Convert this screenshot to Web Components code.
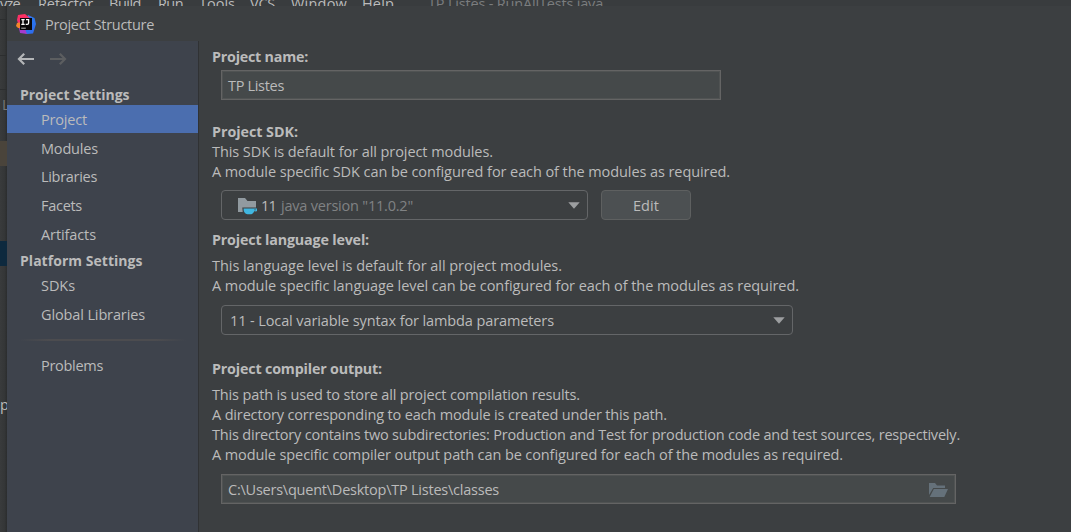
<!DOCTYPE html>
<html lang="en"><head><meta charset="utf-8"><title>Project Structure</title>
<style>
html,body{margin:0;height:100%;overflow:hidden;background:#3c3f41}
body{font:14.5px/20px "Open Sans","Noto Sans",sans-serif;color:#bbbbbb}
</style></head><body>
<ide-window></ide-window>
<script>
const define = (name, html, setup) => customElements.define(name, class extends HTMLElement {
  connectedCallback() {
    if (this.shadowRoot) return;
    const t = document.createElement('template');
    t.innerHTML = html;
    this.attachShadow({mode: 'open'}).append(t.content.cloneNode(true));
    if (setup) setup(this, this.shadowRoot);
  }
});

// One line of text, tracked so that it spans the width given by "w".
define('fit-text', `<style>:host{display:block;white-space:pre;height:20px;line-height:20px}span{display:inline-block}</style><span><slot></slot></span>`, (el, root) => {
  const s = root.querySelector('span'), w = +el.getAttribute('w');
  const n = el.textContent.length;
  if (w) s.style.letterSpacing = ((w - s.getBoundingClientRect().width) / n) + 'px';
});

define('menu-strip', `<style>
:host{display:block;height:6px;overflow:hidden;background:#393c3e}
div{display:grid;grid-template-columns:38px 71px 49px 41px 51px 41px 71px 66px 1fr;margin-top:-6px;height:20px}
.t{color:#7b7d7e}</style>
<div><fit-text w="20">yze</fit-text><fit-text w="55">Refactor</fit-text><fit-text w="32">Build</fit-text><fit-text w="25">Run</fit-text><fit-text w="36">Tools</fit-text><fit-text w="25">VCS</fit-text><fit-text w="56">Window</fit-text><fit-text w="32">Help</fit-text><fit-text class="t" w="175">TP Listes - RunAllTests.java</fit-text></div>`);

define('editor-edge', `<style>
:host{display:flex;flex-direction:column;overflow:hidden;background:linear-gradient(90deg,#393b3c,#343637 65%,#2b2d2e)}
i{flex:none;height:1px;background:#2c2e2f}
fit-text{flex:none}
.l{color:#777}
.warn{height:25px;flex:none;background:#4a443b}.sel{height:25px;flex:none;background:#0d293e}
</style>
<i style="margin-top:13px"></i><i style="margin-top:35px"></i><i style="margin-top:33px"></i>
<fit-text class="l" style="margin:5px 0 0 2px">L</fit-text>
<div class="warn" style="margin-top:26px"></div><div class="sel" style="margin-top:75px"></div>
<fit-text style="margin-top:129px">p</fit-text>`);

define('title-bar', `<style>:host{display:flex;align-items:center;height:35px;padding-left:9px;box-sizing:border-box;gap:9px}svg{display:block}fit-text{margin-top:2px}</style>
<svg width="20" height="20" viewBox="0 0 20 20"><defs><linearGradient id="b" x1="0" y1="0" x2="1" y2="1"><stop stop-color="#9457d8"/><stop offset=".45" stop-color="#2878ee"/><stop offset="1" stop-color="#3267ec"/></linearGradient><linearGradient id="r" x1="0" y1="0" x2="0" y2="1"><stop stop-color="#ff315f"/><stop offset="1" stop-color="#e52d86"/></linearGradient></defs>
<path d="M12 1 18.5 4 20 10 17 19.5 11 20 5 17Z" fill="url(#b)"/><path d="M2 1 9 0 15 5 9 17 3 13 1 6Z" fill="url(#r)"/><path d="M1 9 6 8 7 15 2 14 0 12Z" fill="#f5852b"/><path d="M3 14 9 15 11 20 4 19Z" fill="#a53bcc"/><path d="M4 4H16V16H4Z" fill="#080709"/><path d="M5.3 5.6H8.7M7 5.6V10.3M5.3 10.3H8.7M10 5.6H12.6V9Q12.6 10.4 11.2 10.4H9.7" stroke="#fff" stroke-width="1.3" fill="none"/><path d="M5.2 14.2H9.8" stroke="#aaa" stroke-width="1.1"/></svg>
<fit-text w="109">Project Structure</fit-text>`);

define('nav-arrow', `<style>:host{display:block;width:17px;height:12px;color:#b4b6b8}:host([dir=forward]){transform:scaleX(-1);color:#5c5e60}svg{display:block}</style>
<svg width="17" height="12" viewBox="0 0 17 12" fill="none" stroke="currentColor" stroke-width="2.2"><path d="M17 6H2M7.2 .8 2 6 7.2 11.2"/></svg>`);

define('nav-heading', `<style>:host{display:flex;align-items:center;height:23px;padding-left:13px;font-weight:700;font-size:14px}</style><slot></slot>`);
define('nav-item', `<style>:host{display:flex;align-items:center;height:29px;padding-left:34px}:host([selected]){height:28px;box-sizing:border-box;padding-top:2px;background:#4b6eaf}</style><slot></slot>`);
define('nav-line', `<style>:host{display:flex;align-items:center;height:22px}div{flex:1;height:2px;margin:0 12px 0 12px;background:linear-gradient(90deg,transparent,#4c4c4f 18%,#4c4c4f 82%,transparent)}</style><div></div>`);

define('settings-nav', `<style>
:host{display:block;background:#3e434c;border-right:1px solid #303234}
.arrows{display:flex;gap:16px;height:43px;padding:12px 0 0 10px;box-sizing:border-box}
nav-item.s{height:28px}.top{margin-top:1px}
</style>
<div class="arrows"><nav-arrow></nav-arrow><nav-arrow dir="forward"></nav-arrow></div>
<nav-heading style="height:21px"><fit-text w="109.5">Project Settings</fit-text></nav-heading>
<nav-item selected><fit-text w="46">Project</fit-text></nav-item>
<nav-item class="top"><fit-text w="57">Modules</fit-text></nav-item>
<nav-item class="s"><fit-text w="56">Libraries</fit-text></nav-item>
<nav-item><fit-text w="41">Facets</fit-text></nav-item>
<nav-item><fit-text w="55">Artifacts</fit-text></nav-item>
<nav-heading><fit-text w="122.5">Platform Settings</fit-text></nav-heading>
<nav-item class="s"><fit-text w="34">SDKs</fit-text></nav-item>
<nav-item><fit-text w="104">Global Libraries</fit-text></nav-item>
<nav-line></nav-line>
<nav-item><fit-text w="62">Problems</fit-text></nav-item>`);

define('text-field', `<style>:host{display:flex;align-items:center;justify-content:space-between;height:30px;box-sizing:border-box;border:1px solid #646464;box-shadow:inset 0 0 0 1px #505353;background:#45494a;padding:2px 7px 0 6px}</style><slot></slot><slot name="end"></slot>`);
define('combo-box', `<style>:host{display:flex;align-items:center;height:30px;box-sizing:border-box;border:1px solid #646668;border-radius:4px;padding:0 7px 0 8px}.c{flex:1;display:flex;align-items:center;padding-top:2px}svg{display:block}</style><div class="c"><slot></slot></div><svg width="12" height="7" viewBox="0 0 12 7"><path d="M.3.3H11.7L6 6.8Z" fill="#9c9ea0"/></svg>`);
define('push-button', `<style>:host{display:flex;align-items:center;justify-content:center;width:90px;height:30px;box-sizing:border-box;border:1px solid #5e6060;border-radius:4px;background:#4c5052;padding:2px 0 0 1px}</style><slot></slot>`);
define('jdk-icon', `<style>:host{display:block;width:20px;height:18px;margin-right:3px}svg{display:block}</style><svg width="20" height="18" viewBox="0 0 20 18"><path d="M0 1H7L9.5 4H18V15H0Z" fill="#919aa0"/><path d="M4.3 10.5H20V14.8H17V18H5Z" fill="#3c3f41"/><path d="M5.5 11.5H19V14.2H16.2Q15.2 17.3 12 17.3H9.5Q5.6 16.5 5.5 11.5Z" fill="#40b6e0"/><path d="M16.3 12.5H17.8V13.3H16.3Z" fill="#3c3f41"/></svg>`);
define('folder-icon', `<style>:host{display:block;width:19px;height:14px;margin-top:-1px}svg{display:block}</style><svg width="19" height="14" viewBox="0 0 19 14"><path d="M0 0H6L8 2.5H16V5H4.2L0 12Z M4.8 6H19L15.3 14H.7Z" fill="#65717a"/></svg>`);

define('project-page', `<style>
:host{display:block;padding:6px 0 0 13px;box-sizing:border-box}
b{display:block;font-size:14.3px}
text-field,combo-box,.row{margin-left:9px}
.row{display:flex;gap:12.5px}
.dim{color:#808284;margin-left:5px}
</style>
<b><fit-text w="96">Project name:</fit-text></b>
<text-field style="width:500px;margin-top:3px"><fit-text w="56">TP Listes</fit-text></text-field>
<b style="margin-top:22px"><fit-text w="86">Project SDK:</fit-text></b>
<fit-text w="281">This SDK is default for all project modules.</fit-text>
<fit-text w="518">A module specific SDK can be configured for each of the modules as required.</fit-text>
<div class="row" style="margin-top:8px"><combo-box style="width:367px;margin:0;padding-left:16px"><jdk-icon></jdk-icon><fit-text w="15">11</fit-text><fit-text class="dim" w="132">java version "11.0.2"</fit-text></combo-box><push-button><fit-text w="26">Edit</fit-text></push-button></div>
<b style="margin-top:10px"><fit-text w="157">Project language level:</fit-text></b>
<fit-text style="margin-top:6px" w="350">This language level is default for all project modules.</fit-text>
<fit-text w="587">A module specific language level can be configured for each of the modules as required.</fit-text>
<combo-box style="width:572px;margin-top:9px"><fit-text w="324">11 - Local variable syntax for lambda parameters</fit-text></combo-box>
<b style="margin-top:24px"><fit-text w="170">Project compiler output:</fit-text></b>
<fit-text style="margin-top:6px" w="368">This path is used to store all project compilation results.</fit-text>
<fit-text w="455">A directory corresponding to each module is created under this path.</fit-text>
<fit-text w="748">This directory contains two subdirectories: Production and Test for production code and test sources, respectively.</fit-text>
<fit-text w="631">A module specific compiler output path can be configured for each of the modules as required.</fit-text>
<text-field style="width:735px;margin-top:9px"><fit-text w="271">C:\\Users\\quent\\Desktop\\TP Listes\\classes</fit-text><folder-icon slot="end"></folder-icon></text-field>`);

define('ide-window', `<style>
:host{display:grid;grid-template:6px 1fr/7px 1fr;width:100vw;height:100vh;overflow:hidden}
menu-strip{grid-column:1/3}
.dialog{display:grid;grid-template:35px 1fr/192px 1fr;background:#3c3f41;min-height:0}
title-bar{grid-column:1/3}
</style>
<menu-strip></menu-strip><editor-edge></editor-edge>
<div class="dialog"><title-bar></title-bar><settings-nav></settings-nav><project-page></project-page></div>`);
</script></body></html>
